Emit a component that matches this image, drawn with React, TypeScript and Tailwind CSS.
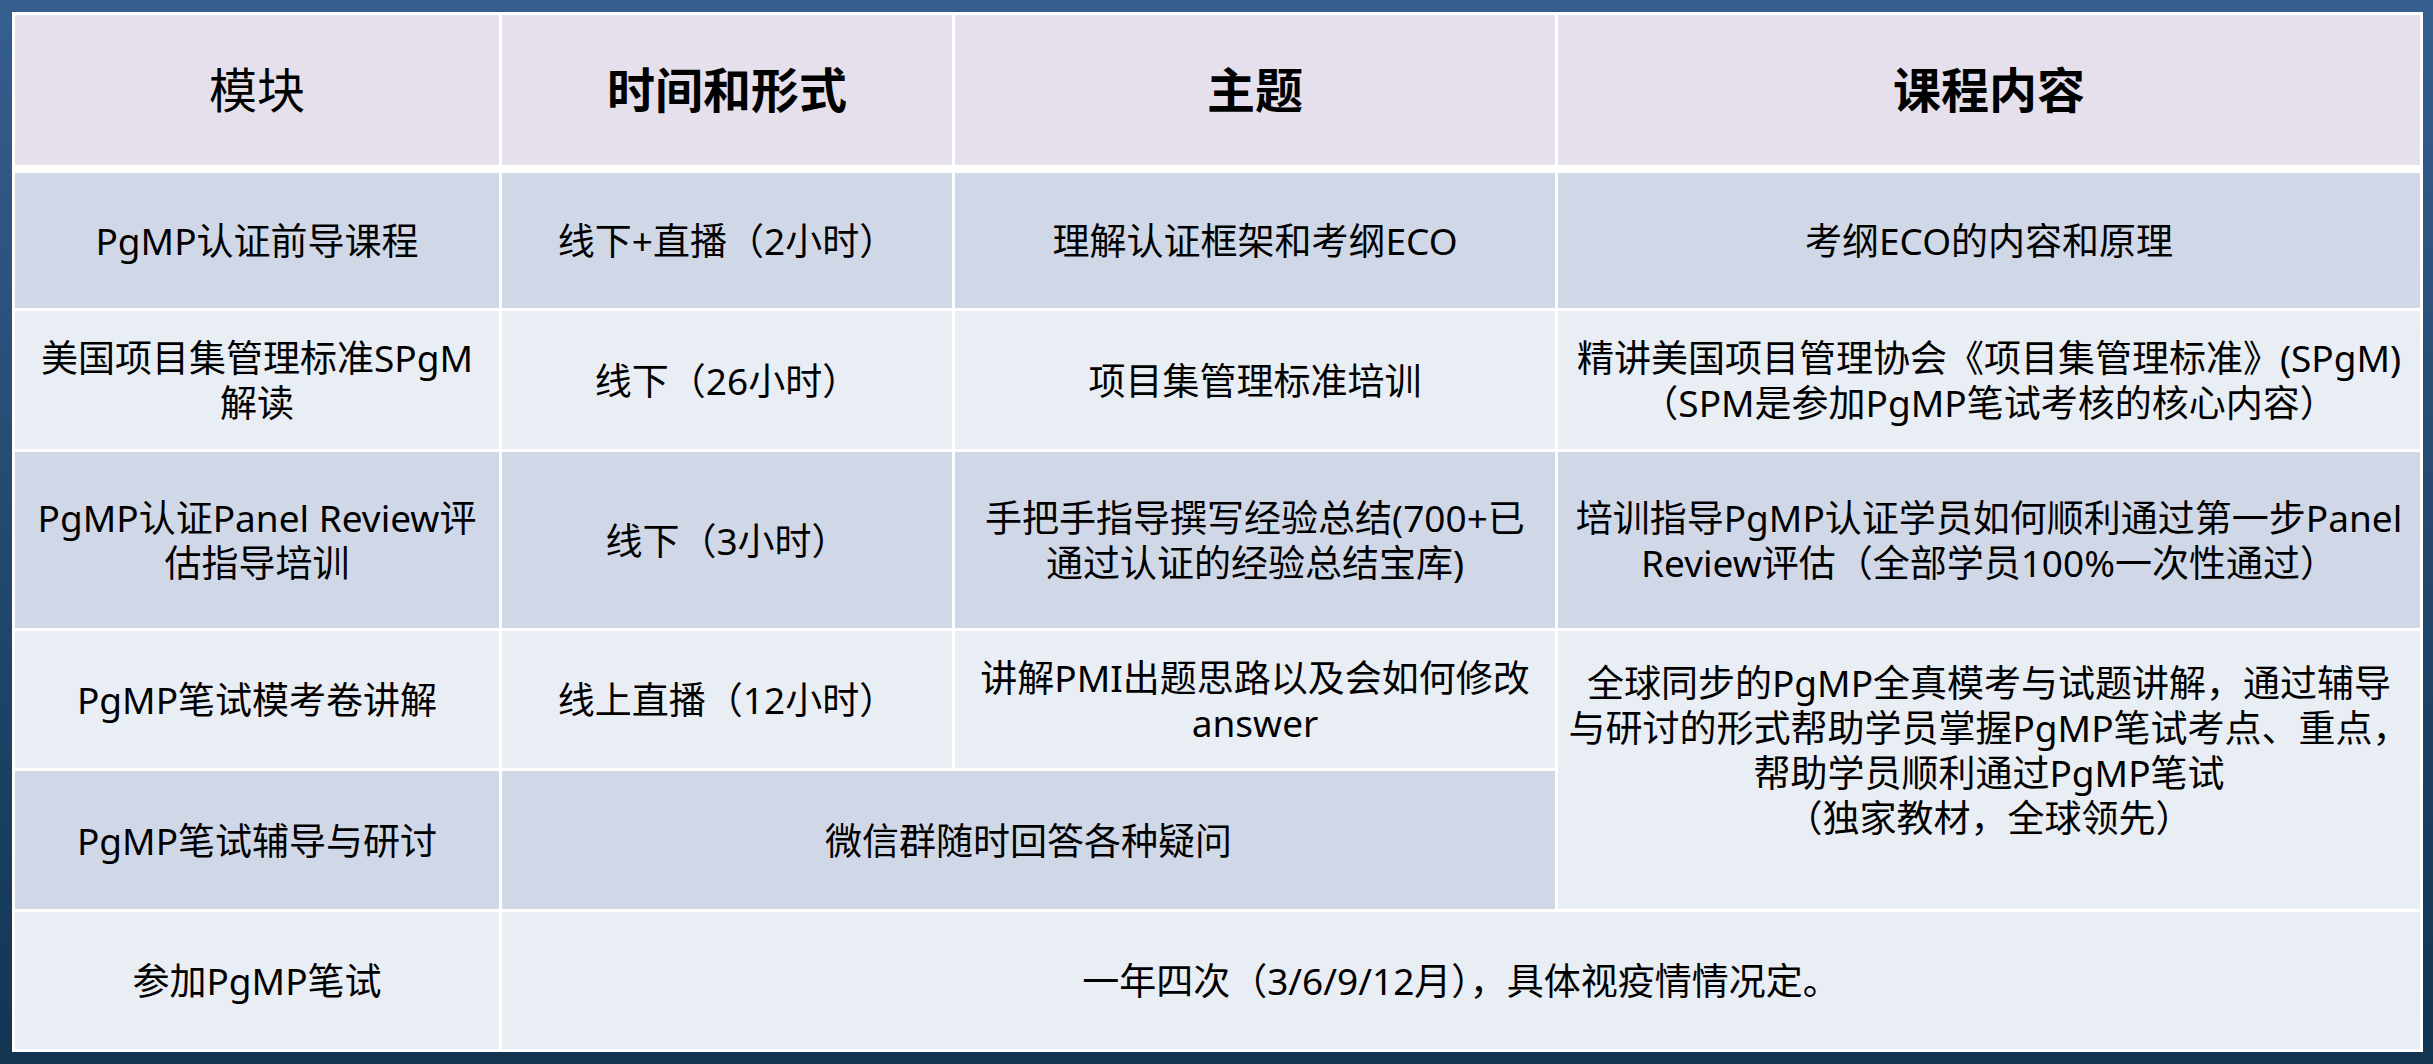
import type { ReactNode } from "react";

const HEADER_BG = "bg-[#e5e0ec]";
const DARK = "bg-[#d0d8e8]";
const LIGHT = "bg-[#e9edf4]";

function Cell({
  bg,
  className = "",
  children,
}: {
  bg: string;
  className?: string;
  children: ReactNode;
}) {
  return (
    <div
      className={`${bg} ${className} flex items-center justify-center text-center text-[37px] leading-[45px] text-black whitespace-nowrap`}
    >
      <div>{children}</div>
    </div>
  );
}

export default function App() {
  return (
    <div className="h-[1064px] w-full bg-gradient-to-b from-[#365e8f] to-[#123552] p-3 font-['Noto_Sans','Noto_Sans_CJK_SC',sans-serif]">
      <div className="flex w-[2411px] flex-col gap-2 bg-white p-[3px]">
        {/* Header row */}
        <div className="grid h-[150px] grid-cols-[484px_450px_600px_862px] gap-[3px] text-[48px] text-black">
          <div className={`${HEADER_BG} flex items-center justify-center`}>模块</div>
          <div className={`${HEADER_BG} flex items-center justify-center font-bold`}>时间和形式</div>
          <div className={`${HEADER_BG} flex items-center justify-center font-bold`}>主题</div>
          <div className={`${HEADER_BG} flex items-center justify-center font-bold`}>课程内容</div>
        </div>

        {/* Body */}
        <div className="grid grid-cols-[484px_450px_600px_862px] grid-rows-[135px_138px_176px_137px_138px_137px] gap-[3px]">
          {/* row 1 */}
          <Cell bg={DARK}>PgMP认证前导课程</Cell>
          <Cell bg={DARK}>线下+直播（2小时）</Cell>
          <Cell bg={DARK}>理解认证框架和考纲ECO</Cell>
          <Cell bg={DARK}>考纲ECO的内容和原理</Cell>

          {/* row 2 */}
          <Cell bg={LIGHT}>
            美国项目集管理标准SPgM
            <br />
            解读
          </Cell>
          <Cell bg={LIGHT}>线下（26小时）</Cell>
          <Cell bg={LIGHT}>项目集管理标准培训</Cell>
          <Cell bg={LIGHT}>
            精讲美国项目管理协会《项目集管理标准》(SPgM)
            <br />
            （SPM是参加PgMP笔试考核的核心内容）
          </Cell>

          {/* row 3 */}
          <Cell bg={DARK}>
            PgMP认证Panel Review评
            <br />
            估指导培训
          </Cell>
          <Cell bg={DARK}>线下（3小时）</Cell>
          <Cell bg={DARK}>
            手把手指导撰写经验总结(700+已
            <br />
            通过认证的经验总结宝库)
          </Cell>
          <Cell bg={DARK}>
            培训指导PgMP认证学员如何顺利通过第一步Panel
            <br />
            Review评估（全部学员100%一次性通过）
          </Cell>

          {/* row 4 */}
          <Cell bg={LIGHT}>PgMP笔试模考卷讲解</Cell>
          <Cell bg={LIGHT}>线上直播（12小时）</Cell>
          <Cell bg={LIGHT}>
            讲解PMI出题思路以及会如何修改
            <br />
            answer
          </Cell>
          <Cell bg={LIGHT} className="row-span-2 pb-10">
            全球同步的PgMP全真模考与试题讲解，通过辅导
            <br />
            与研讨的形式帮助学员掌握PgMP笔试考点、重点，
            <br />
            帮助学员顺利通过PgMP笔试
            <br />
            （独家教材，全球领先）
          </Cell>

          {/* row 5 */}
          <Cell bg={DARK}>PgMP笔试辅导与研讨</Cell>
          <Cell bg={DARK} className="col-span-2">
            微信群随时回答各种疑问
          </Cell>

          {/* row 6 */}
          <Cell bg={LIGHT}>参加PgMP笔试</Cell>
          <Cell bg={LIGHT} className="col-span-3">
            一年四次（3/6/9/12月），具体视疫情情况定。
          </Cell>
        </div>
      </div>
    </div>
  );
}
